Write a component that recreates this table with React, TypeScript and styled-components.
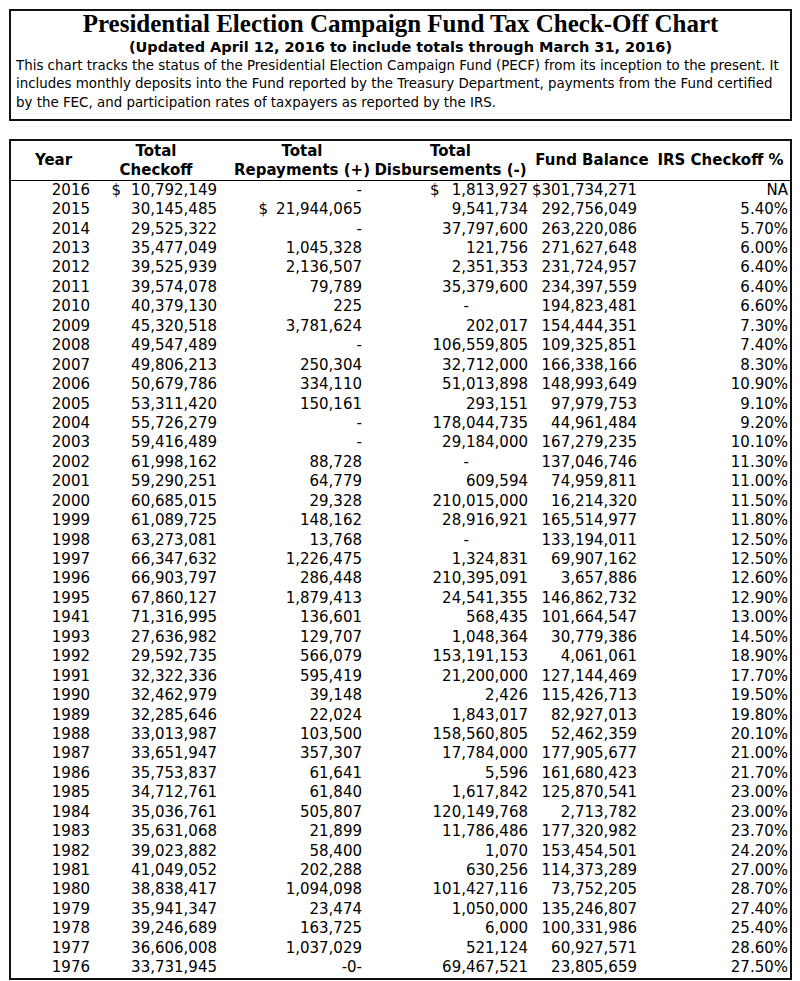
import React from "react";
import styled, { createGlobalStyle } from "styled-components";

const GlobalStyle = createGlobalStyle`
  html, body { margin: 0; padding: 0; background: #fff; }
  body { font-family: "DejaVu Sans", Verdana, sans-serif; color: #000; }
`;

const Page = styled.div`
  padding: 9px 8px 0 9px;
  display: flex;
  flex-direction: column;
  gap: 18px;
`;

const HeaderBox = styled.section`
  border: 2px solid #111;
  padding: 0 5px 7px 5px;
  display: flex;
  flex-direction: column;
`;

const Title = styled.h1`
  margin: 0;
  font-family: "Liberation Serif", "Times New Roman", serif;
  font-weight: bold;
  font-size: 25px;
  line-height: 26px;
  text-align: center;
`;

const Subtitle = styled.h2`
  margin: 0;
  font-family: "DejaVu Sans", Verdana, sans-serif;
  font-weight: bold;
  font-size: 14.5px;
  line-height: 20px;
  text-align: center;
`;

const Intro = styled.p`
  margin: 0;
  font-size: 13.4px;
  line-height: 18.3px;
`;

const TableBox = styled.div`
  border: 2px solid #111;
`;

const Table = styled.table`
  width: 100%;
  border-collapse: collapse;
  table-layout: fixed;
  font-size: 15px;
  line-height: 19.43px;
`;

const Head = styled.th`
  font-weight: bold;
  vertical-align: middle;
  padding: 1px 0 0 0;
  line-height: 18.9px;
  border-bottom: 1px solid #000;
`;

const HeadInner = styled.div<{ $shift: number }>`
  display: flex;
  flex-direction: column;
  align-items: center;
  white-space: nowrap;
  transform: translateX(${(p) => p.$shift}px);
`;

const Cell = styled.td<{ $pr: number }>`
  padding: 0 ${(p) => p.$pr}px 0 0;
  text-align: right;
  white-space: nowrap;
`;

const Dollar = styled.span<{ $gap: number }>`
  margin-right: ${(p) => p.$gap}px;
`;

type Col = { w: number; pr: number; shift: number; gap: number; dashPr?: number };

const cols: Col[] = [
  { w: 91, pr: 12, shift: -3, gap: 0 },
  { w: 124, pr: 9, shift: -8, gap: 10 },
  { w: 150, pr: 14, shift: 1, gap: 8 },
  { w: 155, pr: 3, shift: -3, gap: 12, dashPr: 62 },
  { w: 116, pr: 10, shift: 3, gap: 0 },
  { w: 143, pr: 2, shift: 2, gap: 0 },
];

const headers: string[][] = [
  ["Year"],
  ["Total", "Checkoff"],
  ["Total", "Repayments (+)"],
  ["Total", "Disbursements (-)"],
  ["Fund Balance"],
  ["IRS Checkoff %"],
];

const raw = `2016|$10,792,149|-|$1,813,927|$301,734,271|NA
2015|30,145,485|$21,944,065|9,541,734|292,756,049|5.40%
2014|29,525,322|-|37,797,600|263,220,086|5.70%
2013|35,477,049|1,045,328|121,756|271,627,648|6.00%
2012|39,525,939|2,136,507|2,351,353|231,724,957|6.40%
2011|39,574,078|79,789|35,379,600|234,397,559|6.40%
2010|40,379,130|225|-|194,823,481|6.60%
2009|45,320,518|3,781,624|202,017|154,444,351|7.30%
2008|49,547,489|-|106,559,805|109,325,851|7.40%
2007|49,806,213|250,304|32,712,000|166,338,166|8.30%
2006|50,679,786|334,110|51,013,898|148,993,649|10.90%
2005|53,311,420|150,161|293,151|97,979,753|9.10%
2004|55,726,279|-|178,044,735|44,961,484|9.20%
2003|59,416,489|-|29,184,000|167,279,235|10.10%
2002|61,998,162|88,728|-|137,046,746|11.30%
2001|59,290,251|64,779|609,594|74,959,811|11.00%
2000|60,685,015|29,328|210,015,000|16,214,320|11.50%
1999|61,089,725|148,162|28,916,921|165,514,977|11.80%
1998|63,273,081|13,768|-|133,194,011|12.50%
1997|66,347,632|1,226,475|1,324,831|69,907,162|12.50%
1996|66,903,797|286,448|210,395,091|3,657,886|12.60%
1995|67,860,127|1,879,413|24,541,355|146,862,732|12.90%
1941|71,316,995|136,601|568,435|101,664,547|13.00%
1993|27,636,982|129,707|1,048,364|30,779,386|14.50%
1992|29,592,735|566,079|153,191,153|4,061,061|18.90%
1991|32,322,336|595,419|21,200,000|127,144,469|17.70%
1990|32,462,979|39,148|2,426|115,426,713|19.50%
1989|32,285,646|22,024|1,843,017|82,927,013|19.80%
1988|33,013,987|103,500|158,560,805|52,462,359|20.10%
1987|33,651,947|357,307|17,784,000|177,905,677|21.00%
1986|35,753,837|61,641|5,596|161,680,423|21.70%
1985|34,712,761|61,840|1,617,842|125,870,541|23.00%
1984|35,036,761|505,807|120,149,768|2,713,782|23.00%
1983|35,631,068|21,899|11,786,486|177,320,982|23.70%
1982|39,023,882|58,400|1,070|153,454,501|24.20%
1981|41,049,052|202,288|630,256|114,373,289|27.00%
1980|38,838,417|1,094,098|101,427,116|73,752,205|28.70%
1979|35,941,347|23,474|1,050,000|135,246,807|27.40%
1978|39,246,689|163,725|6,000|100,331,986|25.40%
1977|36,606,008|1,037,029|521,124|60,927,571|28.60%
1976|33,731,945|-0-|69,467,521|23,805,659|27.50%`;

const rows = raw.split("\n").map((l) => l.split("|"));

function renderValue(v: string, gap: number) {
  if (v.startsWith("$")) {
    return (
      <>
        <Dollar $gap={gap}>$</Dollar>
        {v.slice(1)}
      </>
    );
  }
  return v;
}

export default function App() {
  return (
    <>
      <GlobalStyle />
      <Page>
        <HeaderBox>
          <Title>Presidential Election Campaign Fund Tax Check-Off Chart</Title>
          <Subtitle>(Updated April 12, 2016 to include totals through March 31, 2016)</Subtitle>
          <Intro>
            This chart tracks the status of the Presidential Election Campaign Fund (PECF) from its inception to the present. It
            includes monthly deposits into the Fund reported by the Treasury Department, payments from the Fund certified
            by the FEC, and participation rates of taxpayers as reported by the IRS.
          </Intro>
        </HeaderBox>
        <TableBox>
          <Table>
            <colgroup>
              {cols.map((c, i) => (
                <col key={i} style={{ width: c.w }} />
              ))}
            </colgroup>
            <thead>
              <tr>
                {headers.map((h, i) => (
                  <Head key={i}>
                    <HeadInner $shift={cols[i].shift}>
                      {h.map((line) => (
                        <span key={line}>{line}</span>
                      ))}
                    </HeadInner>
                  </Head>
                ))}
              </tr>
            </thead>
            <tbody>
              {rows.map((r) => (
                <tr key={r[0] + r[1]}>
                  {r.map((v, i) => (
                    <Cell key={i} $pr={v === "-" && cols[i].dashPr ? cols[i].dashPr! : cols[i].pr}>
                      {renderValue(v, cols[i].gap)}
                    </Cell>
                  ))}
                </tr>
              ))}
            </tbody>
          </Table>
        </TableBox>
      </Page>
    </>
  );
}
